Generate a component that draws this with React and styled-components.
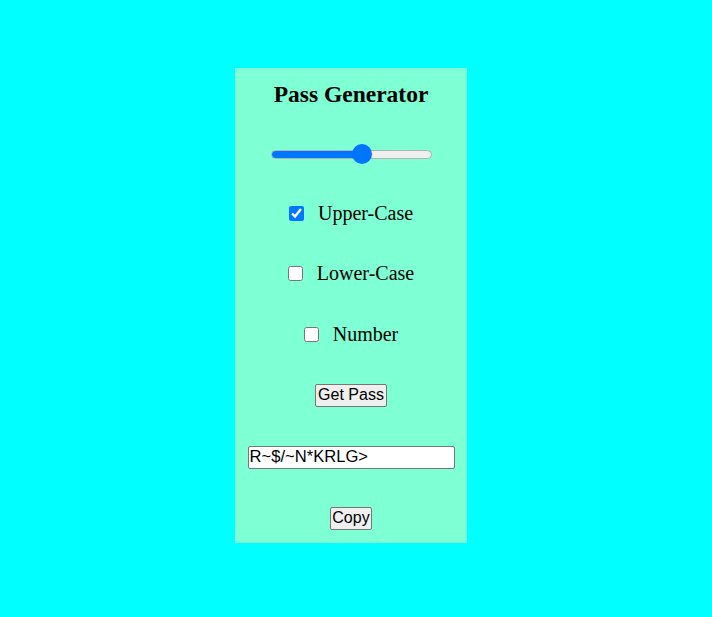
import React, { useState } from 'react'
import styled, { createGlobalStyle } from 'styled-components'

const GlobalStyle = createGlobalStyle`
    html, body {
        margin: 0;
        padding: 0;
        background: #00ffff;
        font-family: "Liberation Serif", "Times New Roman", serif;
    }
`

const Page = styled.div`
    display: flex;
    justify-content: center;
    align-items: flex-start;
    width: 712px;
    height: 617px;
    padding: 68px 10px 0 0;
    box-sizing: border-box;
`

const Panel = styled.div`
    width: 232px;
    height: 475px;
    background: #7fffd4;
    display: flex;
    flex-direction: column;
    align-items: center;
    padding-top: 11px;
    box-sizing: border-box;
`

const Row = styled.div`
    height: 30px;
    margin-top: ${p => p.space || 0}px;
    display: flex;
    align-items: center;
    justify-content: center;
    gap: ${p => p.gap || 0}px;
`

const Title = styled.h2`
    margin: 0;
    font-size: 23.5px;
    font-weight: bold;
    color: #000;
`

const Slider = styled.input`
    -webkit-appearance: none;
    appearance: none;
    width: 161px;
    height: 9px;
    margin: 0;
    border: 1px solid #b2b2b2;
    border-radius: 5px;
    box-sizing: border-box;
    background: linear-gradient(to right, #0075ff 0%, #0075ff ${p => p.fill}%, #efefef ${p => p.fill}%, #efefef 100%);
    outline: none;

    &::-webkit-slider-thumb {
        -webkit-appearance: none;
        width: 20px;
        height: 20px;
        border-radius: 50%;
        background: #0075ff;
        border: none;
    }
`

const Check = styled.input`
    width: 15px;
    height: 15px;
    margin: 0;
    accent-color: #0075ff;
`

const Label = styled.label`
    font-size: 20px;
    color: #000;
`

const Button = styled.button`
    font-family: "Liberation Sans", Arial, sans-serif;
    font-size: 16px;
    height: 23px;
    padding: 0 ${p => p.pad || 2}px;
    background: #efefef;
    border: 1px solid #767676;
    border-radius: 2px;
    color: #000;
`

const PassField = styled.input`
    width: 207px;
    height: 23px;
    box-sizing: border-box;
    padding: 0 1px;
    font-family: "Liberation Sans", Arial, sans-serif;
    font-size: 16.6px;
    border: 1px solid #767676;
    border-radius: 2px;
    background: #fff;
    color: #000;
`

const options = [
    { name: 'upper', label: 'Upper-Case', checked: true, space: 29 },
    { name: 'lower', label: 'Lower-Case', checked: false, space: 30 },
    { name: 'number', label: 'Number', checked: false, space: 31 },
]

export default function App() {
    const [length, setLength] = useState(58)
    const [pass, setPass] = useState('R~$/~N*KRLG>')
    // thumb travels 141px of the 161px track
    const fill = ((10 + (length / 100) * 141) / 161) * 100

    return <>
        <GlobalStyle />
        <Page>
            <Panel>
                <Row>
                    <Title>Pass Generator</Title>
                </Row>
                <Row space={30}>
                    <Slider type="range" min="0" max="100" value={length} fill={fill} onChange={e => setLength(e.target.value)} />
                </Row>
                {
                    options.map(o => (
                        <Row key={o.name} space={o.space} gap={14}>
                            <Check type="checkbox" id={o.name} defaultChecked={o.checked} />
                            <Label htmlFor={o.name}>{o.label}</Label>
                        </Row>
                    ))
                }
                <Row space={31}>
                    <Button>Get Pass</Button>
                </Row>
                <Row space={32}>
                    <PassField type="text" value={pass} onChange={e => setPass(e.target.value)} />
                </Row>
                <Row space={31}>
                    <Button pad={1}>Copy</Button>
                </Row>
            </Panel>
        </Page>
    </>
}
